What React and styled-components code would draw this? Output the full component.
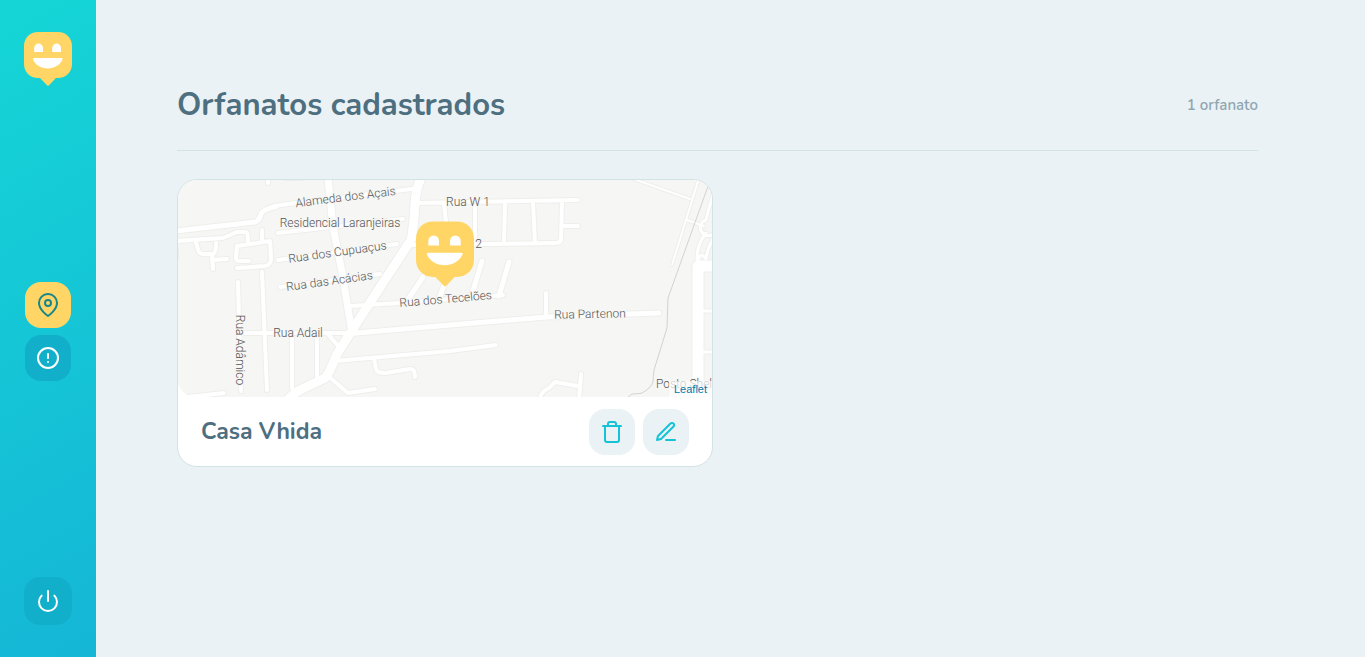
import React from "react";
import styled, { createGlobalStyle } from "styled-components";
import { FiMapPin, FiAlertCircle, FiPower, FiTrash, FiEdit3 } from "react-icons/fi";

const GlobalStyle = createGlobalStyle`
  *, *::before, *::after { box-sizing: border-box; }
  body {
    margin: 0;
    background: #ebf2f5;
    color: #4d6f80;
    font-family: Nunito, Lato, "Open Sans", sans-serif;
  }
`;

const Page = styled.div`
  display: flex;
  min-height: 100vh;
`;

const Sidebar = styled.aside`
  position: sticky;
  top: 0;
  flex: none;
  display: flex;
  flex-direction: column;
  align-items: center;
  justify-content: space-between;
  width: 96px;
  height: 100vh;
  padding: 32px 0;
  background: linear-gradient(329.54deg, #15b6d6 0%, #15d6d6 100%);
`;

const SidebarNav = styled.nav`
  display: flex;
  flex-direction: column;
  gap: 7px;
`;

const SquareButton = styled.button`
  display: flex;
  align-items: center;
  justify-content: center;
  width: ${(p) => p.$size || 46}px;
  height: ${(p) => p.$size || 46}px;
  padding: 0;
  border: 0;
  border-radius: 16px;
  background: ${(p) => p.$background};
  color: ${(p) => p.$color};
  cursor: pointer;
`;

const Main = styled.main`
  flex: 1;
  min-width: 0;
  padding: 82px 107px 32px 81px;
`;

const Header = styled.header`
  display: flex;
  align-items: center;
  justify-content: space-between;
  height: 69px;
  padding-bottom: 22px;
  border-bottom: 1px solid #d3e2e5;
`;

const Title = styled.h1`
  margin: 0;
  font-size: 31px;
  line-height: 44px;
  font-weight: 700;
`;

const Count = styled.span`
  color: #8fa7b2;
  font-size: 15px;
  line-height: 20px;
  font-weight: 600;
`;

const CardGrid = styled.section`
  display: grid;
  grid-template-columns: repeat(2, 1fr);
  gap: 9px;
  margin-top: 28px;
`;

const Card = styled.article`
  overflow: hidden;
  border: 1px solid #d3e2e5;
  border-radius: 20px;
  background: #fff;
`;

const MapArea = styled.div`
  position: relative;
  height: 217px;
`;

const MapDrawing = styled.svg`
  display: block;
  width: 100%;
  height: 100%;
  background: #f6f6f4;
  font-family: Roboto, sans-serif;
  font-size: 12px;
  font-weight: 300;
`;

const Marker = styled.div`
  position: absolute;
  top: 41px;
  left: 50%;
  transform: translateX(-50%);
`;

const Attribution = styled.a`
  position: absolute;
  right: 0;
  bottom: 0;
  padding: 0 5px;
  background: rgba(255, 255, 255, 0.7);
  color: #0078a8;
  font: 11px/16px "Liberation Sans", Arial, sans-serif;
  text-decoration: none;
`;

const CardFooter = styled.footer`
  display: flex;
  align-items: center;
  justify-content: space-between;
  height: 69px;
  padding: 0 23px;
`;

const CardTitle = styled.h2`
  margin: 0;
  font-size: 23px;
  line-height: 34px;
  font-weight: 700;
`;

const Actions = styled.div`
  display: flex;
  gap: 8px;
`;

const HappyFace = styled.svg`
  display: block;
`;

function HappyLogo({ width, height }) {
  return (
    <HappyFace width={width} height={height} viewBox="0 0 48 54" role="img" aria-label="Happy">
      <path
        fill="#ffd666"
        d="M14 0H34C42 0 48 6 48 14V32C48 40 42 46 34 46H33C32 46 31.500 46.300 31 47L25 53.300Q24 54.300 23 53.300L17 47C16.500 46.300 16 46 15 46H14C6 46 0 40 0 32V14C0 6 6 0 14 0Z"
      />
      <path
        fill="#fff"
        d="M10.200 20V16A4.400 4.400 0 0 1 19 16V20ZM28.200 20V16A4.400 4.400 0 0 1 37 16V20ZM10 26H37.500Q39 26 38.500 27.500C36 33 30.500 36.400 23.700 36.400S11.500 33 9 27.500Q8.500 26 10 26Z"
      />
    </HappyFace>
  );
}

const roads = [
  { w: 5, d: "M176 231L255 222Q259 221 261 214Q262 210 277 206" },
  { w: 4, d: "M280 205L412 189" },
  { w: 4, d: "M176 241L223 238L237 232H246Q248 232 248 241" },
  { w: 4, d: "M237 246L270 241Q271 255 271 259Q271 265 265 266L237 268M237 246L236 258Q236 261 240 261H249M262 230V241" },
  { w: 4, d: "M196 243L199 252Q200 254 204 254H213Q216 253 216 243M212 255L213 269M213 260L227 259M268 178V183M285 178H303M176 257V250" },
  { w: 4, d: "M278 233L403 219M278 260L397 244M280 287L380 274" },
  { w: 7, d: "M328 178L333 227L342 272L351 327" },
  { w: 9, d: "M422 176Q416 187 415 204Q413 234 411 240L360 318L337 354Q329 374 325 378L300 390Q291 395 287 401" },
  { w: 4, d: "M416 203L578 200M444 203L446 222M475 203V243M505 202L504 243M533 202L535 243M562 201L561 240Q560 243 556 243L412 245M562 226H578" },
  { w: 5, d: "M482 261L472 294M509 262L499 296M423 277L407 301M445 283L438 301" },
  { w: 4, d: "M350 306L400 303L503 295" },
  { w: 5, d: "M345 334L450 325L547 317L659 313" },
  { w: 4, d: "M546 293V316M245 333H352M327 333L339 347" },
  { w: 4, d: "M335 361L450 351L496 345M374 358L376 369Q377 373 385 373L410 369Q415 368 415 377" },
  { w: 4, d: "M238 282L241 391M262 272L267 390M292 338V388M317 337V377" },
  { w: 4, d: "M327 375L348 393L375 389M188 397L224 393" },
  { w: 4, d: "M540 400Q540 392 549 388L555 382L578 386M581 374L579 400" },
  { w: 2, d: "M631 178L690 199M699 178L672 265M687 220L704 226" },
  { w: 3, d: "M714 192Q709 207 706 220A8 8 0 1 0 714 222M706 233Q697 244 697 259M714 237Q707 249 706 259M698 260Q701 251 706 259" },
  { w: 11, d: "M698 400V266H716" },
  { w: 3, d: "M702 311H716M702 352H716" },
];

const labels = [
  { x: 346, y: 201, rotate: -7, text: "Alameda dos Açais" },
  { x: 340, y: 227, rotate: 0, text: "Residencial Laranjeiras" },
  { x: 338, y: 256, rotate: -8, text: "Rua dos Cupuaçus" },
  { x: 330, y: 285, rotate: -8, text: "Rua das Acácias" },
  { x: 468, y: 206, rotate: 0, text: "Rua W 1" },
  { x: 460, y: 248, rotate: 0, text: "Rua W 2" },
  { x: 446, y: 303, rotate: -5, text: "Rua dos Tecelões" },
  { x: 590, y: 318, rotate: -1, text: "Rua Partenon" },
  { x: 298, y: 337, rotate: 0, text: "Rua Adail" },
  { x: 236, y: 350, rotate: 90, text: "Rua Adâmico" },
  { x: 684, y: 388, rotate: 0, text: "Posto Shel" },
];

function StreetMap() {
  return (
    <MapDrawing viewBox="178 180 534 217" preserveAspectRatio="xMidYMid slice">
      <g fill="none" stroke="#eeeeec" strokeLinecap="round" strokeLinejoin="round">
        {roads.map((r) => (
          <path key={r.d} d={r.d} strokeWidth={r.w + 2} />
        ))}
      </g>
      <g fill="none" stroke="#fff" strokeLinecap="round" strokeLinejoin="round">
        {roads.map((r) => (
          <path key={r.d} d={r.d} strokeWidth={r.w} />
        ))}
      </g>
      <path d="M178 384Q181 392 190 397H178Z" fill="#fff" />
      <path
        d="M711 180L707 189L668 298L667 328L654 370Q653 377 653 382Q651 388 642 393Q638 394 632 394L628 397"
        fill="none"
        stroke="#d2d2d0"
      />
      <g fill="#555" stroke="#f6f6f4" strokeWidth="2" paintOrder="stroke" textAnchor="middle">
        {labels.map((l) => (
          <text key={l.text} x={l.x} y={l.y} transform={`rotate(${l.rotate} ${l.x} ${l.y})`}>
            {l.text}
          </text>
        ))}
      </g>
    </MapDrawing>
  );
}

export default function App() {
  return (
    <Page>
      <GlobalStyle />
      <Sidebar>
        <HappyLogo width={48} height={54} />
        <SidebarNav>
          <SquareButton type="button" $background="#ffd666" $color="#15868a" aria-label="Orfanatos">
            <FiMapPin size={24} />
          </SquareButton>
          <SquareButton type="button" $background="#12afcb" $color="#fff" aria-label="Pendentes">
            <FiAlertCircle size={24} />
          </SquareButton>
        </SidebarNav>
        <SquareButton type="button" $size={48} $background="#12afcb" $color="#fff" aria-label="Sair">
          <FiPower size={24} />
        </SquareButton>
      </Sidebar>
      <Main>
        <Header>
          <Title>Orfanatos cadastrados</Title>
          <Count>1 orfanato</Count>
        </Header>
        <CardGrid>
          <Card>
            <MapArea>
              <StreetMap />
              <Marker>
                <HappyLogo width={58} height={66} />
              </Marker>
              <Attribution href="https://leafletjs.com">Leaflet</Attribution>
            </MapArea>
            <CardFooter>
              <CardTitle>Casa Vhida</CardTitle>
              <Actions>
                <SquareButton type="button" $background="#ebf2f5" $color="#15c3d6" aria-label="Excluir">
                  <FiTrash size={24} />
                </SquareButton>
                <SquareButton type="button" $background="#ebf2f5" $color="#15c3d6" aria-label="Editar">
                  <FiEdit3 size={24} />
                </SquareButton>
              </Actions>
            </CardFooter>
          </Card>
        </CardGrid>
      </Main>
    </Page>
  );
}
